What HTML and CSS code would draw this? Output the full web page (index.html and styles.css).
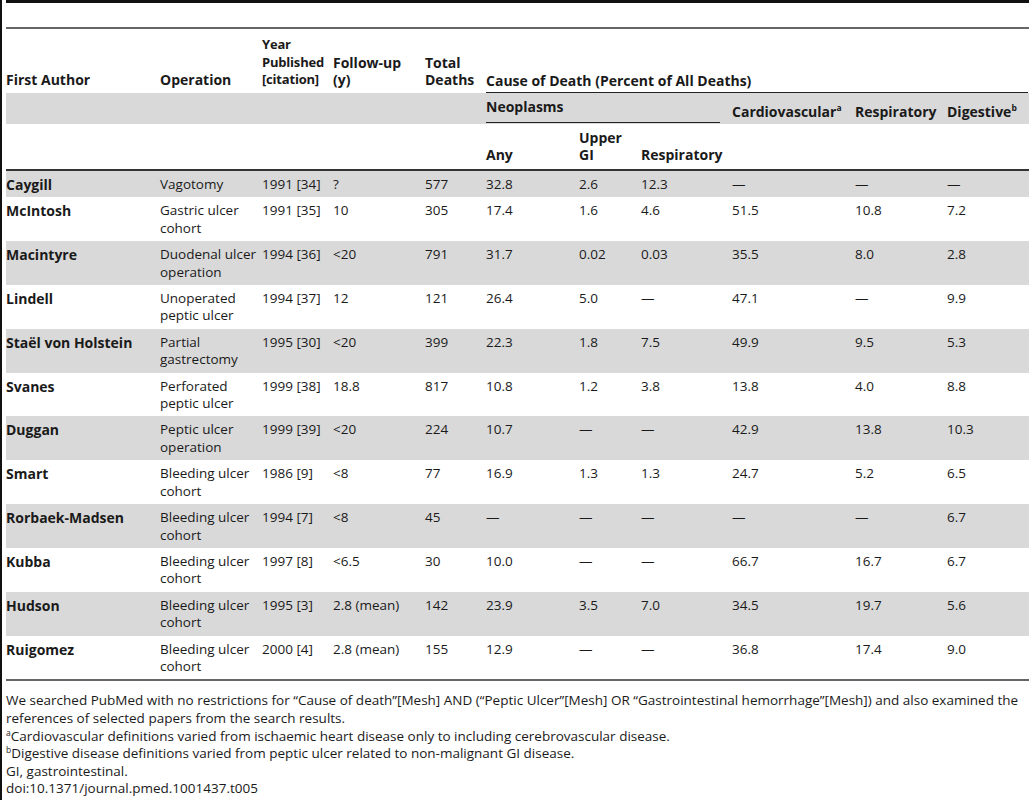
FILE: index.html
```html
<!DOCTYPE html>
<html lang="en">
<head>
<meta charset="UTF-8" />
<title>Table 5. Cause of death after peptic ulcer</title>
<link rel="stylesheet" href="styles.css">
</head>
<body>
<div class="top-rule"></div>
<table class="deaths">
  <colgroup>
    <col class="c-author"><col class="c-op"><col class="c-year"><col class="c-follow"><col class="c-total">
    <col class="c-any"><col class="c-upper"><col class="c-resp"><col class="c-cardio"><col class="c-resp2"><col class="c-dig">
  </colgroup>
  <thead>
    <tr class="h-top">
      <th>First Author</th>
      <th>Operation</th>
      <th class="tight">Year<br>Published<br>[citation]</th>
      <th>Follow-up<br>(y)</th>
      <th>Total<br>Deaths</th>
      <th colspan="6" class="group"><div class="line">Cause of Death (Percent of All Deaths)</div></th>
    </tr>
    <tr class="h-mid">
      <th></th><th></th><th></th><th></th><th></th>
      <th colspan="3" class="neo"><div class="line">Neoplasms</div></th>
      <th>Cardiovascular<sup>a</sup></th>
      <th>Respiratory</th>
      <th>Digestive<sup>b</sup></th>
    </tr>
    <tr class="h-low">
      <th></th><th></th><th></th><th></th><th></th>
      <th>Any</th>
      <th>Upper<br>GI</th>
      <th>Respiratory</th>
      <th></th><th></th><th></th>
    </tr>
  </thead>
  <tbody>
    <tr><td class="name">Caygill</td><td>Vagotomy</td><td>1991 [34]</td><td>?</td><td>577</td><td>32.8</td><td>2.6</td><td>12.3</td><td>—</td><td>—</td><td>—</td></tr>
    <tr><td class="name">McIntosh</td><td>Gastric ulcer cohort</td><td>1991 [35]</td><td>10</td><td>305</td><td>17.4</td><td>1.6</td><td>4.6</td><td>51.5</td><td>10.8</td><td>7.2</td></tr>
    <tr><td class="name">Macintyre</td><td>Duodenal ulcer operation</td><td>1994 [36]</td><td>&lt;20</td><td>791</td><td>31.7</td><td>0.02</td><td>0.03</td><td>35.5</td><td>8.0</td><td>2.8</td></tr>
    <tr><td class="name">Lindell</td><td>Unoperated peptic ulcer</td><td>1994 [37]</td><td>12</td><td>121</td><td>26.4</td><td>5.0</td><td>—</td><td>47.1</td><td>—</td><td>9.9</td></tr>
    <tr><td class="name">Staël von Holstein</td><td>Partial gastrectomy</td><td>1995 [30]</td><td>&lt;20</td><td>399</td><td>22.3</td><td>1.8</td><td>7.5</td><td>49.9</td><td>9.5</td><td>5.3</td></tr>
    <tr><td class="name">Svanes</td><td>Perforated peptic ulcer</td><td>1999 [38]</td><td>18.8</td><td>817</td><td>10.8</td><td>1.2</td><td>3.8</td><td>13.8</td><td>4.0</td><td>8.8</td></tr>
    <tr><td class="name">Duggan</td><td>Peptic ulcer operation</td><td>1999 [39]</td><td>&lt;20</td><td>224</td><td>10.7</td><td>—</td><td>—</td><td>42.9</td><td>13.8</td><td>10.3</td></tr>
    <tr><td class="name">Smart</td><td>Bleeding ulcer cohort</td><td>1986 [9]</td><td>&lt;8</td><td>77</td><td>16.9</td><td>1.3</td><td>1.3</td><td>24.7</td><td>5.2</td><td>6.5</td></tr>
    <tr><td class="name">Rorbaek-Madsen</td><td>Bleeding ulcer cohort</td><td>1994 [7]</td><td>&lt;8</td><td>45</td><td>—</td><td>—</td><td>—</td><td>—</td><td>—</td><td>6.7</td></tr>
    <tr><td class="name">Kubba</td><td>Bleeding ulcer cohort</td><td>1997 [8]</td><td>&lt;6.5</td><td>30</td><td>10.0</td><td>—</td><td>—</td><td>66.7</td><td>16.7</td><td>6.7</td></tr>
    <tr><td class="name">Hudson</td><td>Bleeding ulcer cohort</td><td>1995 [3]</td><td>2.8 (mean)</td><td>142</td><td>23.9</td><td>3.5</td><td>7.0</td><td>34.5</td><td>19.7</td><td>5.6</td></tr>
    <tr><td class="name">Ruigomez</td><td>Bleeding ulcer cohort</td><td>2000 [4]</td><td>2.8 (mean)</td><td>155</td><td>12.9</td><td>—</td><td>—</td><td>36.8</td><td>17.4</td><td>9.0</td></tr>
  </tbody>
</table>
<div class="notes">
  <p>We searched PubMed with no restrictions for “Cause of death”[Mesh] AND (“Peptic Ulcer”[Mesh] OR “Gastrointestinal hemorrhage”[Mesh]) and also examined the references of selected papers from the search results.</p>
  <p><sup>a</sup>Cardiovascular definitions varied from ischaemic heart disease only to including cerebrovascular disease.</p>
  <p><sup>b</sup>Digestive disease definitions varied from peptic ulcer related to non-malignant GI disease.</p>
  <p>GI, gastrointestinal.</p>
  <p>doi:10.1371/journal.pmed.1001437.t005</p>
</div>
</body>
</html>
```

FILE: styles.css
```css
html,body {margin:0;padding:0;background:#fff;}
body {
  border-left:2px solid #111;padding-left:4px;min-height:800px;box-sizing:border-box;
  font-family:"Open Sans","Noto Sans",sans-serif;font-size:13.5px;color:#1a1a1a;
}
.top-rule {border-top:3px solid #111;height:24px;}

.deaths {width:1023px;border-collapse:collapse;table-layout:fixed;border-top:2px solid #666;border-bottom:2px solid #666;}
.c-author {width:154px;}
.c-op {width:102px;}
.c-year {width:71px;}
.c-follow {width:92px;}
.c-total {width:61px;}
.c-any {width:93px;}
.c-upper {width:62px;}
.c-resp {width:91px;}
.c-cardio {width:123px;}
.c-resp2 {width:92px;}
.c-dig {width:82px;}

.deaths th {text-align:left;font-weight:bold;font-size:14px;line-height:17.5px;padding:0 1px 0 0;vertical-align:bottom;}
.deaths th.tight {font-size:13px;letter-spacing:-0.2px;}
.deaths th sup {font-size:8.5px;line-height:0;vertical-align:6px;}
.h-top th {padding-top:7px;padding-bottom:4px;}
.h-top th.group {padding-bottom:0;}
.h-top th.group .line {border-bottom:1px solid #222;padding-bottom:2px;}
.h-mid th {background:#d9d9d9;padding-top:5px;padding-bottom:4px;}
.h-mid th.neo {vertical-align:top;padding-right:12px;padding-bottom:1px;}
.h-mid th.neo .line {border-bottom:1px solid #222;padding-bottom:7px;}
.h-low th {padding-top:4.5px;padding-bottom:5.5px;border-bottom:2px solid #333;}

.deaths td {line-height:17.4px;padding:5px 0 4px 0;vertical-align:top;}
.deaths tbody tr:nth-child(odd) td {background:#d9d9d9;}
.deaths td.name {font-weight:bold;font-size:14px;}

.notes {margin-top:11px;line-height:17.6px;}
.notes p {margin:0;}
.notes sup {font-size:8.5px;line-height:0;vertical-align:5px;}
```
